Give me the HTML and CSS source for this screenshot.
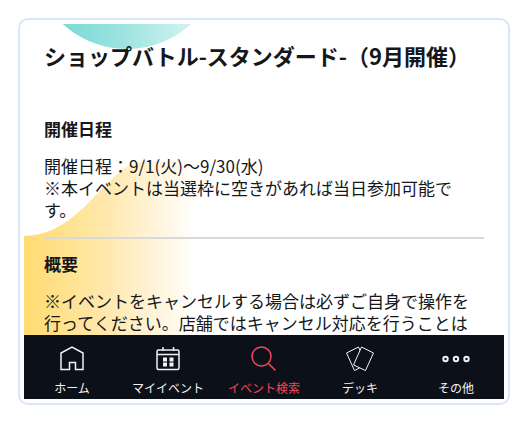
FILE: index.html
```html
<!DOCTYPE html>
<html lang="ja">

<head>
  <meta charset="UTF-8" />
  <meta name="viewport" content="width=device-width, initial-scale=1.0" />
  <title>ショップバトル-スタンダード-（9月開催）</title>
  <link rel="stylesheet" href="styles.css">
</head>

<body>
  <div class="frame">
    <main class="event">
      <!-- Background shapes -->
      <svg class="event-bg" width="480" height="312" aria-hidden="true">
        <defs>
          <linearGradient id="teal" gradientUnits="userSpaceOnUse" x1="40" y1="0" x2="180" y2="0">
            <stop offset="0" stop-color="#7adad5" />
            <stop offset="0.4" stop-color="#9be3df" />
            <stop offset="1" stop-color="#dcf6f3" />
          </linearGradient>
          <linearGradient id="yellow" gradientUnits="userSpaceOnUse" x1="0" y1="0" x2="172" y2="0">
            <stop offset="0" stop-color="#ffdb70" />
            <stop offset="0.5" stop-color="#ffe9b0" />
            <stop offset="0.8" stop-color="#fff6e0" />
            <stop offset="1" stop-color="#ffffff" />
          </linearGradient>
        </defs>
        <circle cx="103" cy="-70" r="95" fill="url(#teal)" />
        <path d="M0 212 C30 212 52 192 69 174 L94 149 C102 141 112 137 130 137 H172 V312 H0 Z" fill="url(#yellow)" />
      </svg>

      <h1 class="event-title">ショップバトル-スタンダード-（9月開催）</h1>

      <section class="event-section">
        <h2>開催日程</h2>
        <p>開催日程：9/1(火)～9/30(水)<br>※本イベントは当選枠に空きがあれば当日参加可能です。</p>
      </section>

      <section class="event-section">
        <h2>概要</h2>
        <p>※イベントをキャンセルする場合は必ずご自身で操作を行ってください。店舗ではキャンセル対応を行うことは</p>
      </section>
    </main>

    <nav class="tab-bar">
      <a href="#home" class="tab">
        <svg width="28" height="28" viewBox="0 0 28 28" aria-hidden="true">
          <path d="M3 24.500 V8 L14 2 L25 8 V24.500 H17.500 V17.500 H11.500 V24.500 Z" />
        </svg>
        <span>ホーム</span>
      </a>
      <a href="#my-events" class="tab">
        <svg width="28" height="28" viewBox="0 0 28 28" aria-hidden="true">
          <rect x="3" y="5" width="22" height="19.500" rx="1.500" />
          <path d="M3 9.500 H25 M9 2 V6 M19.500 2 V6" />
          <path class="solid" d="M9 12.500 h4 v4 h-4 z M15.500 12.500 h4 v4 h-4 z M9 17.500 h4 v4 h-4 z M15.500 17.500 h4 v4 h-4 z" />
        </svg>
        <span>マイイベント</span>
      </a>
      <a href="#search" class="tab active" aria-current="page">
        <svg width="28" height="28" viewBox="0 0 28 28" aria-hidden="true">
          <circle cx="11.500" cy="11.500" r="9.500" />
          <path d="M18.500 18.500 L25.500 25.500" />
        </svg>
        <span>イベント検索</span>
      </a>
      <a href="#deck" class="tab">
        <svg class="thin" width="28" height="28" viewBox="0 0 28 28" aria-hidden="true">
          <path d="M15.500 2 L27.500 8 L19.500 25.500 L7.500 20 Z" />
          <path d="M14 5.500 L12.500 2 L0.500 8 L8.500 25.500 L13.500 23" />
        </svg>
        <span>デッキ</span>
      </a>
      <a href="#other" class="tab">
        <svg class="bold" width="28" height="28" viewBox="0 0 28 28" aria-hidden="true">
          <circle cx="3.500" cy="14" r="2.200" />
          <circle cx="14" cy="14" r="2.200" />
          <circle cx="24.500" cy="14" r="2.200" />
        </svg>
        <span>その他</span>
      </a>
    </nav>
  </div>
</body>

</html>
```
FILE: styles.css
```css
* {
  box-sizing: border-box;
}

body {
  margin: 0;
  padding: 18px;
  height: 100vh;
  background: #fff;
  color: #15171b;
  font-family: "Noto Sans CJK JP", sans-serif;
}

.frame {
  display: flex;
  flex-direction: column;
  height: 100%;
  padding: 4px;
  border: 2px solid #dbe7f9;
  border-radius: 10px;
}

/* Event detail */
.event {
  position: relative;
  flex: 1;
  min-height: 0;
  padding: 15px 20px 0;
  overflow: hidden;
}

.event-bg {
  position: absolute;
  top: 0;
  left: 0;
  z-index: -1;
}

.event-title {
  margin: 0 0 41px;
  font-size: 22px;
  line-height: 32px;
}

.event-section h2 {
  margin: 0;
  font-size: 17px;
  line-height: 34px;
}

.event-section p {
  margin: 9px 0 0;
  font-size: 17px;
  line-height: 22px;
}

.event-section + .event-section {
  margin-top: 16px;
  padding-top: 8px;
  border-top: 2px solid #d9d9da;
}

/* Bottom tab bar */
.tab-bar {
  display: flex;
  height: 64px;
  background: #0c1018;
}

.tab {
  flex: 1;
  display: flex;
  flex-direction: column;
  align-items: center;
  padding-top: 10px;
  color: #f1f2f4;
  font-size: 12px;
  line-height: 18px;
  text-decoration: none;
  white-space: nowrap;
}

.tab span {
  margin-top: 6px;
}

.tab svg {
  fill: none;
  stroke: currentColor;
  stroke-width: 1.5;
}

.tab svg.thin {
  stroke-width: 1;
}

.tab svg.bold {
  stroke-width: 2;
}

.tab .solid {
  fill: currentColor;
  stroke: none;
}

.tab.active {
  color: #f5475b;
}
```
